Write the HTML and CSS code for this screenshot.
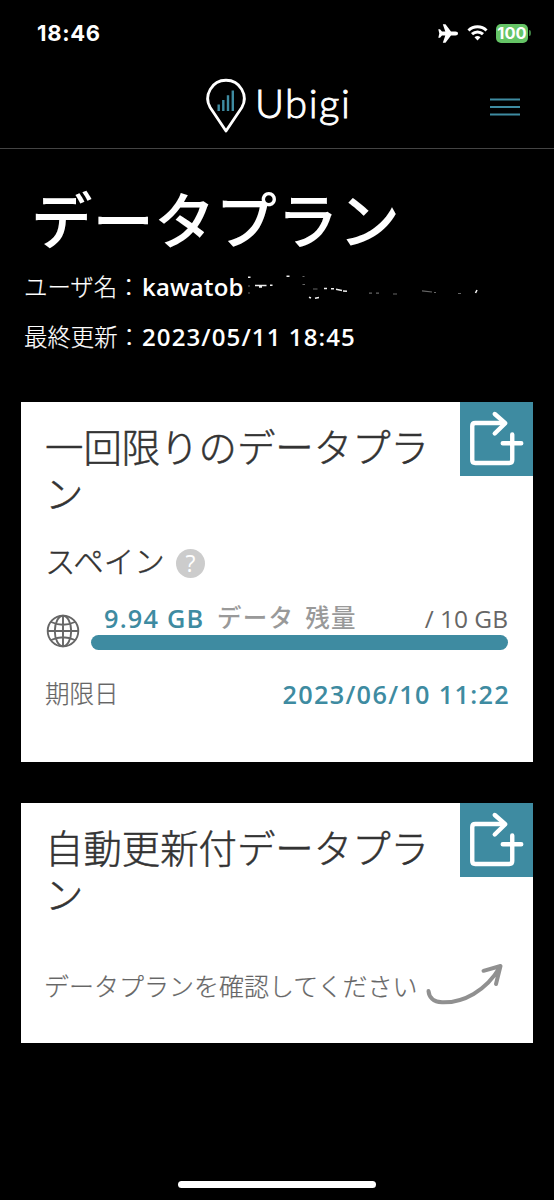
FILE: index.html
```html
<!DOCTYPE html>
<html lang="ja">
<head>
<meta charset="utf-8">
<title>Ubigi</title>
<link rel="stylesheet" href="styles.css">
</head>
<body>
<div class="status">
  <span class="time">18:46</span>
  <div class="status-icons">
    <svg class="plane" viewBox="0 0 20 19"><path d="M20 9.500C20 8.300 19 7.600 17.500 7.600H13L7.500 0.300H4.800L7.300 7.600H4L2 5.300H0.300L1.300 9.500L0.300 13.700H2L4 11.400H7.300L4.800 18.700H7.500L13 11.400H17.500C19 11.400 20 10.700 20 9.500Z"/></svg>
    <svg class="wifi" viewBox="0 0 21 16"><path d="M1.500 5.500C6.500.500 14.500.500 19.500 5.500M5 9.200C8.200 6.200 12.800 6.200 16 9.200"/><path class="dot" d="M7.500 12.200Q10.500 9.800 13.500 12.200L10.500 15.500Z"/></svg>
    <span class="battery">100</span><i class="nub"></i>
  </div>
</div>
<header class="header">
  <div class="brand">
    <svg class="pin" viewBox="0 0 40 54"><path class="outline" d="M20 51L4.200 27.500A18.200 18.200 0 1 1 35.800 27.500Z"/><path class="bars" d="M12.700 24.500V31M17.300 20V31M22 15.300V31M26.800 10.500V31"/></svg>
    <span class="name">Ubigi</span>
  </div>
  <svg class="menu" viewBox="0 0 30 18"><path d="M0 1.500H30M0 9H30M0 16.500H30"/></svg>
</header>
<main>
  <h1 class="title">データプラン</h1>
  <p class="meta"><span class="label">ユーザ名：</span><b class="user">kawatob</b><svg class="redacted" viewBox="0 0 240 30"><path class="strong" d="M4 9.200H6.500M11 17.500H22.500M15 19H18M26 17.200H28.500M42.500 8.200H45.500M80 20.500H83M87 20.700H90M92 21.300L98 22.500M99 23L103 23.300M65 29.300L67 30M71 30.200L75 29.500M231.500 25L233 22"/><path class="faint" d="M4 18H6M4 25H6M58.500 8.500H60.500M58.500 16.500H61M69 21H73.500M125 25.200H128M132 25.200H135M149 26H153M178 22.800L188 24M190 24.500H192M214 25.500H217"/></svg></p>
  <p class="meta"><span class="label">最終更新：</span><b class="updated">2023/05/11 18:45</b></p>

  <section class="card card-once">
    <div class="card-top">
      <h2>一回限りのデータプラン</h2>
      <svg class="add" viewBox="0 0 73 74"><path d="M42 21H15Q12 21 12 24V58Q12 61 15 61H49Q52 61 52 58V32.500M42.500 41.300H61"/><path d="M34.500 12L45 21.200L34.500 31.500"/></svg>
    </div>
    <div class="country"><span>スペイン</span><i class="help">?</i></div>
    <div class="usage">
      <svg class="globe" viewBox="0 0 34 34"><circle cx="17" cy="17" r="15.300"/><ellipse cx="17" cy="17" rx="8.200" ry="15.300"/><path d="M17 1.700V32.300M1.700 17H32.300M5 8Q17 13.500 29 8M5 26Q17 20.500 29 26"/></svg>
      <div class="amount">
        <div class="figures"><b class="left">9.94 GB</b><b class="caption">データ 残量</b><span class="total">/ 10 GB</span></div>
        <div class="bar"></div>
      </div>
    </div>
    <div class="expiry"><span>期限日</span><b>2023/06/10 11:22</b></div>
  </section>

  <section class="card card-auto">
    <div class="card-top">
      <h2>自動更新付データプラン</h2>
      <svg class="add" viewBox="0 0 73 74"><path d="M42 21H15Q12 21 12 24V58Q12 61 15 61H49Q52 61 52 58V32.500M42.500 41.300H61"/><path d="M34.500 12L45 21.200L34.500 31.500"/></svg>
    </div>
    <div class="hint"><span>データプランを確認してください</span><svg class="arrow" viewBox="0 0 78 42"><path d="M2.500 29C3 35 7 40 16 40.300C37 41 60 29 74 5M57.500 8.800L74.500 4L70 22"/></svg></div>
  </section>
</main>
<div class="home"></div>
</body>
</html>
```

FILE: styles.css
```css
* { box-sizing: border-box; }
body {
  margin: 0;
  height: 1200px;
  display: flex;
  flex-direction: column;
  overflow: hidden;
  background: #000;
  color: #fff;
  font-family: "Open Sans", "Noto Sans CJK JP", sans-serif;
}
svg { display: block; flex: none; fill: none; overflow: visible; }
h1, h2, p { margin: 0; white-space: nowrap; }
b { font-weight: 600; }

.status {
  height: 66px;
  padding: 0 23px 0 37px;
  display: flex;
  align-items: center;
  justify-content: space-between;
}
.time { font: 700 22px Inter, sans-serif; letter-spacing: 0.700px; }
.status-icons { display: flex; align-items: center; }
.plane { width: 20px; height: 19px; margin-right: 9px; fill: #fff; }
.wifi { width: 21px; height: 16px; margin-right: 8px; stroke: #fff; stroke-width: 3; }
.wifi .dot { fill: #fff; stroke: none; }
.battery {
  width: 32px;
  height: 19px;
  border-radius: 5px;
  background: #65c466;
  font: 700 16.500px/19px Inter, sans-serif;
  text-align: center;
}
.nub { width: 2px; height: 6px; margin-left: 1px; border-radius: 0 2px 2px 0; background: #3c7a40; }

.header {
  height: 83px;
  padding: 13px 34px 0 206px;
  border-bottom: 1px solid #444;
  display: flex;
  justify-content: space-between;
}
.brand { display: flex; }
.pin { width: 40px; height: 54px; margin-top: 1px; stroke-linejoin: round; }
.outline { stroke: #fff; stroke-width: 2.800; }
.bars { stroke: #3e8ba1; stroke-width: 2.400; }
.name { margin-left: 9px; font: 300 40px/49px Lato, sans-serif; letter-spacing: 1.500px; -webkit-text-stroke: 0.900px #fff; }
.menu { width: 30px; height: 18px; margin-top: 19px; stroke: #3e8ba1; stroke-width: 2.200; }

main { flex: 1; padding: 31px 21px 0; }
.title {
  height: 82px;
  padding-left: 10px;
  font: 500 61.500px/76px "Noto Sans CJK JP", sans-serif;
}
.meta {
  display: flex;
  height: 50px;
  padding-left: 3px;
  font-size: 24px;
  line-height: 50px;
}
.label { width: 118px; font-family: "Noto Sans CJK JP", sans-serif; font-size: 23.400px; font-weight: 300; line-height: 48px; -webkit-text-stroke: 0.200px #fff; }
.user { width: 102px; letter-spacing: 0.200px; }
.updated { letter-spacing: 1.100px; }
.redacted { width: 240px; height: 30px; margin-top: 6px; stroke-width: 1.600; }
.strong { stroke: #eee; }
.faint { stroke: #666; stroke-width: 1.200; }

.card { background: #fff; color: #666; }
.card-once { height: 360px; margin-top: 40px; }
.card-auto { height: 240px; margin-top: 41px; }
.card-top { display: flex; justify-content: space-between; height: 130px; }
h2 {
  width: 410px;
  padding: 20px 0 0 24px;
  color: #333;
  font: 300 38.400px/46px "Noto Sans CJK JP", sans-serif;
  white-space: normal;
  word-break: break-all;
  -webkit-text-stroke: 0.500px #333;
}
.add { width: 73.500px; height: 74px; background: #3e8ba1; stroke: #fff; stroke-width: 4.400; stroke-linecap: round; stroke-linejoin: round; }
.country {
  height: 60px;
  padding-left: 24px;
  display: flex;
  align-items: center;
  color: #333;
  font: 300 30.500px/60px "Noto Sans CJK JP", sans-serif;
  -webkit-text-stroke: 0.400px #333;
}
.country span { height: 64px; }
.help {
  width: 29px;
  height: 29px;
  margin: 3px 0 0 11px;
  border-radius: 50%;
  background: #ccc;
  color: #fff;
  font: 400 23px/29px "Open Sans", sans-serif;
  text-align: center;
  -webkit-text-stroke: 0;
}
.usage { display: flex; padding: 7px 25px 0 25px; height: 68px; }
.globe { width: 34px; height: 34px; margin-top: 15px; stroke: #666; stroke-width: 1.900; }
.amount { flex: 1; margin-left: 11px; }
.figures { display: flex; height: 36px; padding-left: 13px; font-size: 24.500px; line-height: 39px; white-space: nowrap; }
.left { width: 113px; color: #3e8ba1; font-size: 25.300px; letter-spacing: 1.200px; }
.caption { font-family: "Noto Sans CJK JP", sans-serif; font-weight: 500; line-height: 36px; color: #999; letter-spacing: 1.200px; word-spacing: 4.500px; }
.total { margin-left: auto; }
.bar { height: 14.500px; border-radius: 8px; background: #3e8ba1; }
.expiry { display: flex; justify-content: space-between; padding: 0 23px 0 24px; font-size: 24.500px; line-height: 68px; }
.expiry span { font-family: "Noto Sans CJK JP", sans-serif; font-weight: 300; line-height: 66px; -webkit-text-stroke: 0.200px #666; }
.expiry b { color: #3e8ba1; font-size: 25.300px; letter-spacing: 1.300px; }
.hint { display: flex; padding-left: 23px; font: 300 25px/104px "Noto Sans CJK JP", sans-serif; white-space: nowrap; -webkit-text-stroke: 0.200px #666; }
.arrow { width: 78px; height: 42px; margin: 29px 0 0 8px; stroke: #909090; stroke-width: 4; stroke-linecap: round; stroke-linejoin: round; }

.home { width: 198px; height: 7px; margin: 0 0 12px 178px; border-radius: 4px; background: #fff; }
```
